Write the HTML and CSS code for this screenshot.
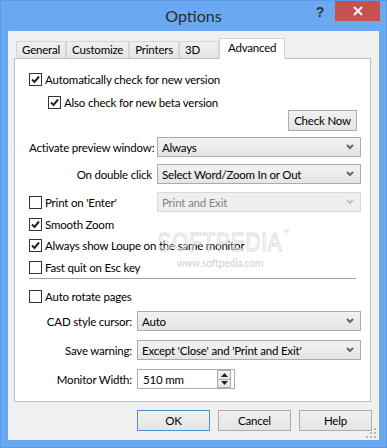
FILE: index.html
```html
<!DOCTYPE html>
<html lang="en">
<head>
    <meta charset="UTF-8">
    <title>Options</title>
    <link rel="stylesheet" href="styles.css">
</head>
<body>

<div class="window">
    <div class="titlebar">
        <span></span>
        <span class="title">Options</span>
        <div class="controls">
            <span class="help">?</span>
            <span class="close">
                <svg width="10" height="10" viewBox="0 0 10 10"><path d="M1 1 L9 9 M9 1 L1 9" stroke="#fff" stroke-width="2"/></svg>
            </span>
        </div>
    </div>

    <div class="client">
        <div class="tabs">
            <span class="tab">General</span>
            <span class="tab">Customize</span>
            <span class="tab">Printers</span>
            <span class="tab">3D</span>
            <span class="tab active">Advanced</span>
        </div>

        <div class="panel">
            <label class="row check first">
                <span class="box"><svg width="11" height="11" viewBox="0 0 11 11"><path d="M2 5.5 L4.5 8 L9 2.5" fill="none" stroke="#222" stroke-width="2"/></svg></span>
                Automatically check for new version
            </label>
            <label class="row check indent">
                <span class="box"><svg width="11" height="11" viewBox="0 0 11 11"><path d="M2 5.5 L4.5 8 L9 2.5" fill="none" stroke="#222" stroke-width="2"/></svg></span>
                Also check for new beta version
            </label>
            <div class="row right">
                <button class="btn small">Check Now</button>
            </div>

            <div class="row field gap6">
                <span class="label wide">Activate preview window:</span>
                <div class="combo"><span>Always</span><svg class="chev" width="8" height="6" viewBox="0 0 8 6"><path d="M1 1 L4 4 L7 1" fill="none" stroke="#666" stroke-width="2"/></svg></div>
            </div>
            <div class="row field gap7">
                <span class="label wide right-text">On double click</span>
                <div class="combo"><span>Select Word/Zoom In or Out</span><svg class="chev" width="8" height="6" viewBox="0 0 8 6"><path d="M1 1 L4 4 L7 1" fill="none" stroke="#666" stroke-width="2"/></svg></div>
            </div>
            <div class="row field gap8">
                <label class="check cb-col">
                    <span class="box"></span>
                    Print on 'Enter'
                </label>
                <div class="combo disabled"><span>Print and Exit</span><svg class="chev" width="8" height="6" viewBox="0 0 8 6"><path d="M1 1 L4 4 L7 1" fill="none" stroke="#c4c4c4" stroke-width="2"/></svg></div>
            </div>

            <label class="row check gap4">
                <span class="box"><svg width="11" height="11" viewBox="0 0 11 11"><path d="M2 5.5 L4.5 8 L9 2.5" fill="none" stroke="#222" stroke-width="2"/></svg></span>
                Smooth Zoom
            </label>
            <label class="row check gap5">
                <span class="box"><svg width="11" height="11" viewBox="0 0 11 11"><path d="M2 5.5 L4.5 8 L9 2.5" fill="none" stroke="#222" stroke-width="2"/></svg></span>
                Always show Loupe on the same monitor
            </label>
            <label class="row check gap6">
                <span class="box"></span>
                Fast quit on Esc key
            </label>

            <div class="separator"></div>

            <label class="row check gap9">
                <span class="box"></span>
                Auto rotate pages
            </label>
            <div class="row field gap7">
                <span class="label narrow">CAD style cursor:</span>
                <div class="combo"><span>Auto</span><svg class="chev" width="8" height="6" viewBox="0 0 8 6"><path d="M1 1 L4 4 L7 1" fill="none" stroke="#666" stroke-width="2"/></svg></div>
            </div>
            <div class="row field gap9">
                <span class="label narrow">Save warning:</span>
                <div class="combo"><span>Except 'Close' and 'Print and Exit'</span><svg class="chev" width="8" height="6" viewBox="0 0 8 6"><path d="M1 1 L4 4 L7 1" fill="none" stroke="#666" stroke-width="2"/></svg></div>
            </div>
            <div class="row field gap9">
                <span class="label narrow">Monitor Width:</span>
                <div class="spin">
                    <span class="value">510 mm</span>
                    <div class="arrows">
                        <span class="arrow"><svg width="7" height="4" viewBox="0 0 7 4"><path d="M0 4 L3.5 0 L7 4 Z" fill="#222"/></svg></span>
                        <span class="arrow"><svg width="7" height="4" viewBox="0 0 7 4"><path d="M0 0 L3.5 4 L7 0 Z" fill="#222"/></svg></span>
                    </div>
                </div>
            </div>

            <div class="watermark">
                <span class="wm-big">SOFTPEDIA<span class="wm-tm">™</span></span>
                <span class="wm-small">www.softpedia.com</span>
            </div>
        </div>

        <div class="buttons">
            <button class="btn default">OK</button>
            <button class="btn">Cancel</button>
            <button class="btn">Help</button>
        </div>

        <svg class="grip" width="11" height="11" viewBox="0 0 11 11">
            <rect x="8" y="0" width="2" height="2" fill="#b8b8b8"/>
            <rect x="4" y="4" width="2" height="2" fill="#b8b8b8"/>
            <rect x="8" y="4" width="2" height="2" fill="#b8b8b8"/>
            <rect x="0" y="8" width="2" height="2" fill="#b8b8b8"/>
            <rect x="4" y="8" width="2" height="2" fill="#b8b8b8"/>
            <rect x="8" y="8" width="2" height="2" fill="#b8b8b8"/>
        </svg>
    </div>
</div>

</body>
</html>
```

FILE: styles.css
```css
* { box-sizing: border-box; }
body { margin: 0; font-family: Lato, "Noto Sans", sans-serif; font-size: 11.5px; letter-spacing: -0.2px; color: #000; }

.window { width: 387px; height: 448px; background: #6aa8f1; border: 1px solid #5b9ae6; padding: 0 7px 7px 7px; display: flex; flex-direction: column; }

.titlebar { height: 30px; display: grid; grid-template-columns: 1fr auto 1fr; }
.title { font-size: 16px; letter-spacing: 0; color: #2b2b2b; padding-top: 5px; }
.controls { justify-self: end; display: flex; align-items: flex-start; margin-right: -1px; }
.help { font-family: "Liberation Sans", sans-serif; font-weight: bold; font-size: 14px; color: #333; margin: 3px 11px 0 0; }
.close { width: 45px; height: 20px; background: #c75050; display: flex; align-items: center; justify-content: center; }

.client { flex: 1; background: #f0f0f0; padding: 7px 8px 9px 6px; display: flex; flex-direction: column; position: relative; }

.tabs { height: 20px; display: flex; align-items: flex-end; margin-left: 2px; white-space: nowrap; }
.tab { height: 17px; min-width: 40px; padding: 0 5px; border: 1px solid #d4d4d4; border-bottom: none; background: linear-gradient(#f0f0f0, #e5e5e5); line-height: 15px; }
.tab.active { height: 21px; margin-bottom: -1px; padding: 0 8px; background: #fff; position: relative; z-index: 1; line-height: 18px; }

.panel { flex: 1; background: #fff; border: 1px solid #c0c0c0; padding: 0 9px 0 14px; position: relative; white-space: nowrap; }

.row { display: flex; align-items: center; }
.check { height: 16px; gap: 3px; }
.first { margin-top: 12px; }
.indent { margin-top: 7px; padding-left: 19px; }
.right { justify-content: flex-end; padding-right: 4px; }
.field { height: 20px; }
.gap4 { margin-top: 4px; }
.gap5 { margin-top: 5px; }
.gap6 { margin-top: 6px; }
.gap7 { margin-top: 7px; }
.gap8 { margin-top: 8px; }
.gap9 { margin-top: 9px; }

.box { width: 13px; height: 13px; border: 1px solid #333; background: #fff; display: flex; align-items: center; justify-content: center; flex: none; }

.label { text-align: right; padding-right: 5px; flex: none; }
.label.wide { width: 128px; text-align: left; }
.label.wide.right-text { text-align: right; }
.label.narrow { width: 108px; }
.cb-col { width: 128px; display: flex; align-items: center; flex: none; }

.combo { flex: 1; height: 20px; border: 1px solid #acacac; background: linear-gradient(#f2f2f2, #e5e5e5); display: flex; align-items: center; justify-content: space-between; padding-left: 4px; }
.combo .chev { margin-right: 6px; }
.combo.disabled { background: #efefef; border-color: #d9d9d9; color: #838383; }

.spin { width: 98px; height: 20px; border: 1px solid #acacac; background: #fff; display: flex; align-items: center; justify-content: space-between; padding-left: 5px; }
.arrows { width: 14px; height: 18px; margin-right: 3px; display: flex; flex-direction: column; }
.arrow { flex: 1; border: 1px solid #acacac; background: linear-gradient(#f2f2f2, #e5e5e5); display: flex; align-items: center; justify-content: center; }
.arrow + .arrow { border-top: none; }

.separator { height: 1px; background: #a0a0a0; margin: 3px 5px 0 0; }

.btn { font-family: inherit; font-size: inherit; letter-spacing: inherit; color: #000; height: 21px; border: 1px solid #acacac; background: linear-gradient(#f0f0f0, #e5e5e5); padding: 0; }
.btn.small { width: 69px; }
.btn.default { border-color: #4a90d9; }

.buttons { display: flex; justify-content: flex-end; gap: 8px; margin-top: 8px; margin-right: -1px; }
.buttons .btn { width: 73px; }

.grip { position: absolute; right: 2px; bottom: 1px; }

.watermark { position: absolute; left: 95px; top: 171px; width: 220px; text-align: center; pointer-events: none; letter-spacing: 0; }
.wm-big { display: block; position: relative; font-family: "Liberation Sans", sans-serif; font-size: 26px; line-height: 24px; color: transparent; -webkit-text-stroke: 1px #dadada; transform: scaleX(0.8); letter-spacing: 1px; }
.wm-tm { position: absolute; font-size: 8px; line-height: 8px; top: -1px; color: #d4d4d4; -webkit-text-stroke: 0; }
.wm-small { display: block; font-size: 11px; line-height: 12px; margin-top: 3px; color: #d0d0d0; transform: scaleX(0.9); }
```
